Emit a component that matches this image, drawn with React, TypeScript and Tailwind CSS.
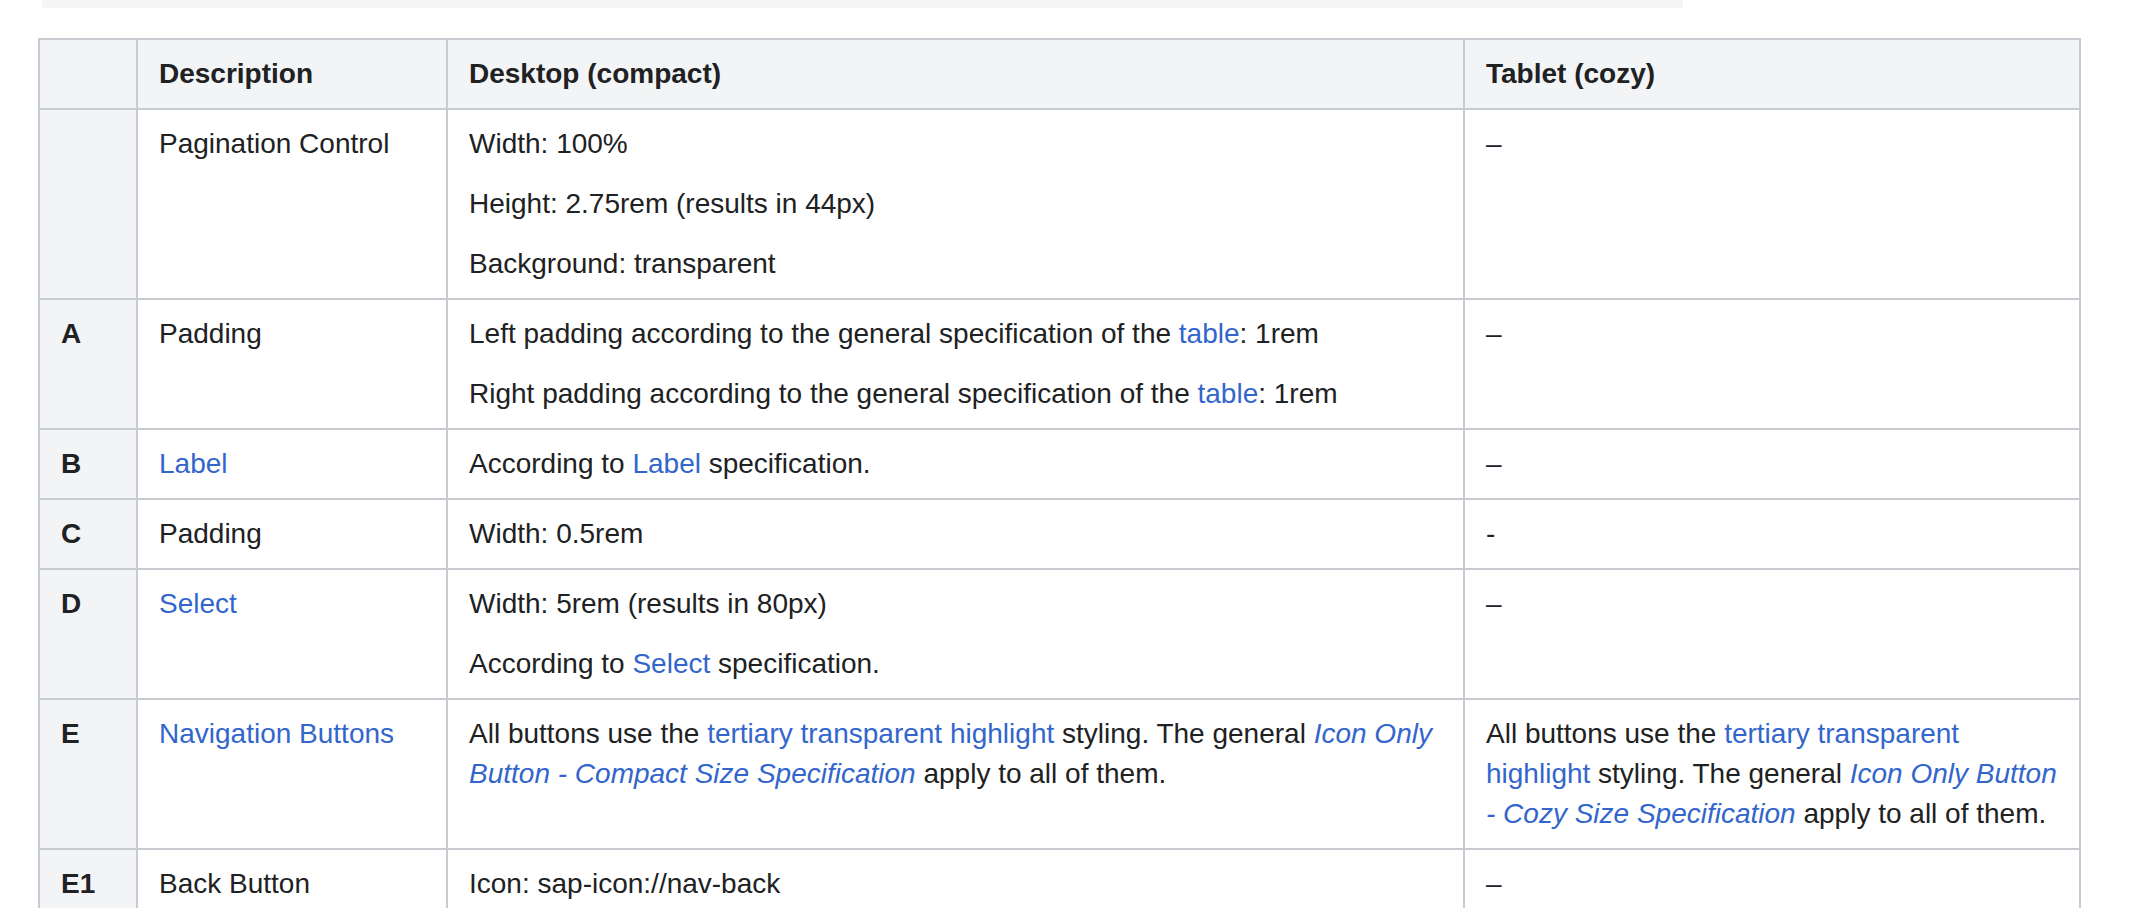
import React from "react";

type Row = {
  key: string;
  name: React.ReactNode;
  desktop: React.ReactNode[];
  tablet: React.ReactNode[];
};

const A = ({ children }: { children: React.ReactNode }) => (
  <a href="#" className="text-[#3366cc] no-underline">
    {children}
  </a>
);

const I = ({ children }: { children: React.ReactNode }) => (
  <a href="#" className="text-[#3366cc] italic no-underline">
    {children}
  </a>
);

const rows: Row[] = [
  {
    key: "",
    name: "Pagination Control",
    desktop: ["Width: 100%", "Height: 2.75rem (results in 44px)", "Background: transparent"],
    tablet: ["–"],
  },
  {
    key: "A",
    name: "Padding",
    desktop: [
      <>
        Left padding according to the general specification of the <A>table</A>: 1rem
      </>,
      <>
        Right padding according to the general specification of the <A>table</A>: 1rem
      </>,
    ],
    tablet: ["–"],
  },
  {
    key: "B",
    name: <A>Label</A>,
    desktop: [
      <>
        According to <A>Label</A> specification.
      </>,
    ],
    tablet: ["–"],
  },
  {
    key: "C",
    name: "Padding",
    desktop: ["Width: 0.5rem"],
    tablet: ["-"],
  },
  {
    key: "D",
    name: <A>Select</A>,
    desktop: [
      "Width: 5rem (results in 80px)",
      <>
        According to <A>Select</A> specification.
      </>,
    ],
    tablet: ["–"],
  },
  {
    key: "E",
    name: <A>Navigation Buttons</A>,
    desktop: [
      <>
        All buttons use the <A>tertiary transparent highlight</A> styling. The general{" "}
        <I>Icon Only Button - Compact Size Specification</I> apply to all of them.
      </>,
    ],
    tablet: [
      <>
        All buttons use the <A>tertiary transparent highlight</A> styling. The general{" "}
        <I>Icon Only Button - Cozy Size Specification</I> apply to all of them.
      </>,
    ],
  },
  {
    key: "E1",
    name: "Back Button",
    desktop: ["Icon: sap-icon://nav-back"],
    tablet: ["–"],
  },
];

const cell = "border-2 border-[#c8ccd1] pt-[14px] pb-[14px] pl-[21px] pr-[16px] align-top text-left";

const Paras = ({ items }: { items: React.ReactNode[] }) => (
  <div className="flex flex-col gap-[20px]">
    {items.map((p, i) => (
      <p key={i}>{p}</p>
    ))}
  </div>
);

export default function App() {
  return (
    <div
      className="min-h-screen bg-white text-[#202122] text-[28px] leading-[40px]"
      style={{ fontFamily: '"Liberation Sans", Arial, sans-serif' }}
    >
      <div className="ml-[42px] w-[1641px] h-[8px] bg-[#f5f5f5]" />
      <table className="mt-[30px] ml-[38px] w-[2041px] table-fixed border-collapse">
        <colgroup>
          <col className="w-[98px]" />
          <col className="w-[310px]" />
          <col className="w-[1017px]" />
          <col className="w-[616px]" />
        </colgroup>
        <thead>
          <tr className="bg-[#f3f4f6]">
            <th className={cell}></th>
            <th className={`${cell} font-bold`}>Description</th>
            <th className={`${cell} font-bold`}>Desktop (compact)</th>
            <th className={`${cell} font-bold`}>Tablet (cozy)</th>
          </tr>
        </thead>
        <tbody>
          {rows.map((r, idx) => (
            <tr key={idx}>
              <td className={`${cell} bg-[#f3f4f6] font-bold`}>{r.key}</td>
              <td className={cell}>{r.name}</td>
              <td className={cell}>
                <Paras items={r.desktop} />
              </td>
              <td className={cell}>
                <Paras items={r.tablet} />
              </td>
            </tr>
          ))}
        </tbody>
      </table>
    </div>
  );
}
